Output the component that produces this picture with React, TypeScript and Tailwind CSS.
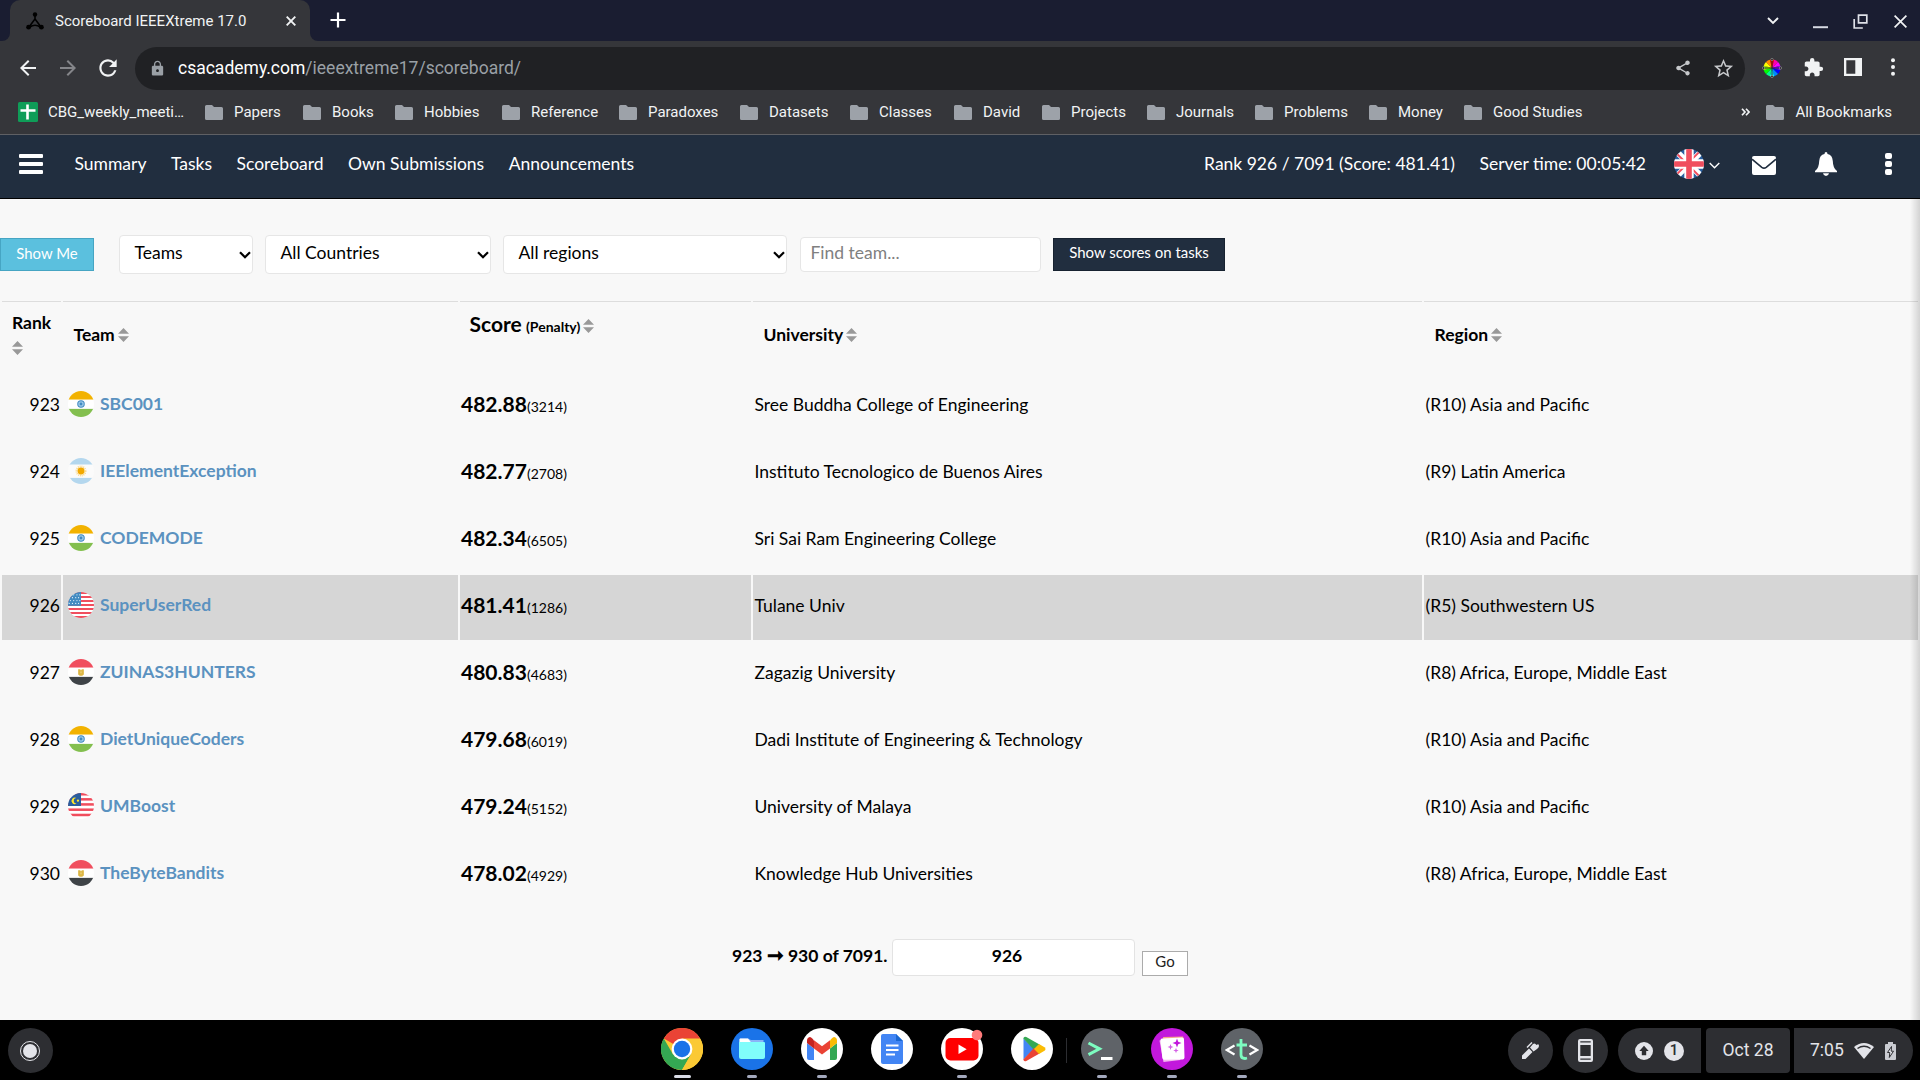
import React from 'react';
import {
  MdArrowBack,
  MdArrowForward,
  MdRefresh,
  MdLock,
  MdShare,
  MdStarBorder,
  MdExtension,
} from 'react-icons/md';

/* ---------- browser chrome ---------- */

function Favicon() {
  return (
    <svg viewBox="0 0 18 18" className="h-[18px] w-[18px]">
      <g stroke="#000" strokeWidth="1.6" fill="none">
        <path d="M9 3v4L3 15M9 7l6 8M3.5 15.5Q9 11 14.500 15.500" />
      </g>
      <circle cx="9" cy="2.500" r="2.200" />
      <circle cx="2.600" cy="15.200" r="2.400" />
      <circle cx="15.400" cy="15.200" r="2.400" />
    </svg>
  );
}

function TabStrip() {
  return (
    <div className="flex h-[41px] items-end bg-[#1a1d31] text-[#f1f3f4]">
      <div className="flex h-[41px] w-[10px] items-end bg-[#35363a]">
        <div className="h-[41px] w-[10px] rounded-br-[8px] bg-[#1a1d31]" />
      </div>
      <div className="flex h-[41px] w-[300px] items-center rounded-t-[10px] bg-[#35363a] pl-[16px]">
        <Favicon />
        <span className="ml-[11px] w-[231px] whitespace-nowrap pt-[2px] text-[15px]">Scoreboard IEEEXtreme 17.0</span>
        <svg viewBox="0 0 10 10" className="h-[10px] w-[10px]" stroke="#f1f3f4" strokeWidth="1.900">
          <path d="M.7.7l8.600 8.600M9.300.7L.7 9.300" />
        </svg>
      </div>
      <div className="h-[41px] w-[10px] bg-[#35363a]">
        <div className="h-[41px] w-[10px] rounded-bl-[8px] bg-[#1a1d31]" />
      </div>
      <svg viewBox="0 0 16 16" className="mb-[13px] ml-[10px] h-[16px] w-[16px]" stroke="#fff" strokeWidth="2.200">
        <path d="M8 .5v15M.5 8h15" />
      </svg>
      <div className="ml-auto flex h-[41px] items-center pr-[13px] pt-px">
        <svg viewBox="0 0 12 8" className="h-[8px] w-[12px]" fill="none" stroke="#f1f3f4" strokeWidth="1.900">
          <path d="M1 1l5 5 5-5" />
        </svg>
        <svg viewBox="0 0 15 15" className="ml-[34px] h-[15px] w-[15px]" fill="none" stroke="#d6d9e2" strokeWidth="2">
          <path d="M0 13.200h15" />
        </svg>
        <svg viewBox="0 0 15 15" className="ml-[25px] h-[15px] w-[15px]" fill="none" stroke="#dfe1e8" strokeWidth="1.700">
          <path d="M5.500 1.200h8.300v7.600H5.500zM1.200 5v9h8.600" />
        </svg>
        <svg viewBox="0 0 13 13" className="ml-[26px] h-[13px] w-[13px]" stroke="#f1f3f4" strokeWidth="1.700">
          <path d="M.6.600l11.800 11.800M12.400.6L.6 12.400" />
        </svg>
      </div>
    </div>
  );
}

function ColorWheel() {
  const hues = ['#f00', '#f0a', '#f0f', '#80f', '#00f', '#08f', '#0ff', '#0f8', '#0f0', '#8f0', '#ff0', '#f80'];
  const point = (deg: number) => {
    const r = ((deg - 90) * Math.PI) / 180;
    return `${10 + 8.5 * Math.cos(r)} ${10 + 8.5 * Math.sin(r)}`;
  };
  return (
    <svg viewBox="0 0 20 20" className="h-[20px] w-[20px]">
      {hues.map((c, i) => (
        <path key={c} fill={c} d={`M10 10L${point(i * 30 - 15)}A8.500 8.500 0 0 1 ${point(i * 30 + 15)}z`} />
      ))}
      <path d="M10 0v20M0 10h20" stroke="#222" strokeWidth=".9" />
      <g fill="#222" stroke="#bbb" strokeWidth=".5">
        <circle cx="10" cy="1.500" r="1.200" />
        <circle cx="10" cy="18.500" r="1.200" />
        <circle cx="1.500" cy="10" r="1.200" />
        <circle cx="18.500" cy="10" r="1.200" />
      </g>
    </svg>
  );
}

function AddressRow() {
  return (
    <div className="flex h-[53px] items-center bg-[#35363a] pt-px">
      <MdArrowBack className="mb-px ml-[16px] h-[24px] w-[24px] text-[#f1f3f4]" />
      <MdArrowForward className="mb-px ml-[16px] h-[24px] w-[24px] text-[#85868a]" />
      <MdRefresh className="mb-px ml-[15px] h-[26px] w-[26px] text-[#f1f3f4]" />
      <div className="ml-[14px] flex h-[43px] w-[1610px] items-center rounded-full bg-[#202124] pl-[14px] pr-[10px]">
        <MdLock className="h-[17px] w-[17px] text-[#9aa0a6]" />
        <span className="ml-[12px] text-[17.5px] text-white">
          csacademy.com<span className="text-[#9aa0a6]">/ieeextreme17/scoreboard/</span>
        </span>
        <MdShare className="ml-auto h-[18px] w-[18px] text-[#c6c8cb]" />
        <MdStarBorder className="ml-[20px] h-[23px] w-[23px] text-[#c6c8cb]" />
      </div>
      <div className="mb-px ml-[17px]">
        <ColorWheel />
      </div>
      <MdExtension className="mb-px ml-[21px] h-[21px] w-[21px] text-[#f1f3f4]" />
      <svg viewBox="0 0 18 18" className="mb-[2px] ml-[20px] h-[18px] w-[18px]">
        <path fill="#f1f3f4" fillRule="evenodd" d="M0 0h18v18H0zM2.300 2.300v13.400h9V2.300z" />
      </svg>
      <svg viewBox="0 0 4 18" className="mb-[2px] ml-[29px] h-[18px] w-[4px]" fill="#f1f3f4">
        <circle cx="2" cy="2.300" r="2" />
        <circle cx="2" cy="9" r="2" />
        <circle cx="2" cy="15.700" r="2" />
      </svg>
    </div>
  );
}

function Folder() {
  return (
    <svg viewBox="0 0 18 15" className="mr-[11px] h-[15px] w-[18px] shrink-0">
      <path fill="#9da2a9" d="M1.500 0h5.500l2 2h7.500Q18 2 18 3.500v10Q18 15 16.500 15h-15Q0 15 0 13.500v-12Q0 0 1.500 0z" />
    </svg>
  );
}

const bookmarks: [string, string][] = [
  ['Papers', 'w-[98px]'],
  ['Books', 'w-[92px]'],
  ['Hobbies', 'w-[107px]'],
  ['Reference', 'w-[117px]'],
  ['Paradoxes', 'w-[121px]'],
  ['Datasets', 'w-[110px]'],
  ['Classes', 'w-[104px]'],
  ['David', 'w-[88px]'],
  ['Projects', 'w-[105px]'],
  ['Journals', 'w-[108px]'],
  ['Problems', 'w-[114px]'],
  ['Money', 'w-[95px]'],
  ['Good Studies', 'w-[120px]'],
];

function BookmarksBar() {
  return (
    <div className="flex h-[41px] items-center whitespace-nowrap border-b border-[#5f6064] bg-[#35363a] pb-[4px] text-[15px] text-[#f1f3f4]">
      <svg viewBox="0 0 20 20" className="ml-[18px] h-[20px] w-[20px]">
        <rect width="20" height="20" rx="1.500" fill="#0f9d58" />
        <path d="M9.500 2.500v15M2.500 8.500h15" stroke="#fff" strokeWidth="2.600" />
      </svg>
      <span className="ml-[10px] w-[157px]">CBG_weekly_meeti…</span>
      {bookmarks.map(([name, width]) => (
        <div key={name} className={`flex shrink-0 items-center ${width}`}>
          <Folder />
          {name}
        </div>
      ))}
      <svg viewBox="0 0 9 8" className="ml-auto h-[8px] w-[9px]" fill="none" stroke="#f1f3f4" strokeWidth="1.700">
        <path d="M1 .7L4 4 1 7.300M5 .7L8 4 5 7.300" />
      </svg>
      <div className="ml-[16px] mr-[28px] flex items-center">
        <Folder />
        All Bookmarks
      </div>
    </div>
  );
}

/* ---------- flags ---------- */

type Country = 'in' | 'ar' | 'us' | 'eg' | 'my' | 'gb';

function Stripes() {
  return (
    <>
      <rect width="64" height="64" fill="#fff" />
      {[0, 1, 2, 3, 4, 5, 6].map((i) => (
        <rect key={i} y={i * 9.850} width="64" height="4.920" fill="#f04e5e" />
      ))}
    </>
  );
}

function FlagArt({ code }: { code: Country }) {
  switch (code) {
    case 'in':
      return (
        <>
          <rect width="64" height="64" fill="#fff" />
          <rect width="64" height="21" fill="#f2b200" />
          <rect y="44" width="64" height="20" fill="#83bf4f" />
          <circle cx="32" cy="32" r="8" fill="#9cc9e8" stroke="#428bc1" strokeWidth="2.500" />
          <circle cx="32" cy="32" r="3.500" fill="#428bc1" />
        </>
      );
    case 'ar':
      return (
        <>
          <rect width="64" height="64" fill="#fbfbfb" />
          <rect width="64" height="16" fill="#b4d7ee" />
          <rect y="49" width="64" height="15" fill="#b4d7ee" />
          <circle cx="32" cy="32" r="11" fill="none" stroke="#fbd88a" strokeWidth="5" strokeDasharray="2.300 2" />
          <circle cx="32" cy="32" r="8.500" fill="#f2a900" />
        </>
      );
    case 'eg':
      return (
        <>
          <rect width="64" height="64" fill="#fff" />
          <rect width="64" height="21" fill="#f04e5e" />
          <rect y="44" width="64" height="20" fill="#3e4347" />
          <path d="M25 25h5l2 3 2-3h5v13l-4 3h-6l-4-3z" fill="#dcb644" />
          <path d="M31 31h2v4h-2z" fill="#f3e0a0" />
        </>
      );
    case 'us':
      return (
        <>
          <Stripes />
          <rect width="32" height="34" fill="#428bc1" />
          {[5, 12, 19, 26].map((y, row) =>
            [6, 14, 22, 29].map((x) => <circle key={`${x}-${y}`} cx={x - (row % 2) * 3} cy={y + 2} r="1.500" fill="#e6f1fa" />),
          )}
        </>
      );
    case 'my':
      return (
        <>
          <rect width="64" height="64" fill="#fff" />
          {[0, 12.5, 25, 38, 51].map((y) => (
            <rect key={y} y={y} width="64" height="6.200" fill="#f04e5e" />
          ))}
          <rect width="32" height="32" fill="#2a5f9e" />
          <path d="M21 12.500a8 8 0 1 0 0 13.500 6.500 6.500 0 1 1 0-13.500z" fill="#ffe62e" />
          <circle cx="24.500" cy="19" r="2.800" fill="#ffe62e" />
        </>
      );
    case 'gb':
      return (
        <>
          <rect width="64" height="64" fill="#2a5f9e" />
          <path d="M0 0l64 64M64 0L0 64" stroke="#fff" strokeWidth="13" />
          <path d="M4 8l56 56M60 0L0 60" stroke="#f04e5e" strokeWidth="4" />
          <path d="M32 0v64M0 32h64" stroke="#fff" strokeWidth="20" />
          <path d="M32 0v64M0 32h64" stroke="#f04e5e" strokeWidth="12" />
        </>
      );
  }
}

function Flag({ code, className }: { code: Country; className: string }) {
  return (
    <span className={`shrink-0 overflow-hidden rounded-full ${className}`}>
      <svg viewBox="0 0 64 64" className="h-full w-full">
        <FlagArt code={code} />
      </svg>
    </span>
  );
}

/* ---------- site navigation ---------- */

function SiteNav() {
  return (
    <nav className="flex h-[64px] items-center border-b border-black bg-[#212e3f] pb-[5px] text-[17.5px] text-white">
      <div className="ml-[19px] flex w-[24px] flex-col gap-[4px]">
        <div className="h-[4px] rounded-[1px] bg-white" />
        <div className="h-[4px] rounded-[1px] bg-white" />
        <div className="h-[4px] rounded-[1px] bg-white" />
      </div>
      <div className="ml-[31.5px] flex gap-[24.5px]">
        <span>Summary</span>
        <span>Tasks</span>
        <span>Scoreboard</span>
        <span>Own Submissions</span>
        <span>Announcements</span>
      </div>
      <div className="ml-auto flex items-center">
        <span>Rank 926 / 7091 (Score: 481.41)</span>
        <span className="ml-[24.5px]">Server time: 00:05:42</span>
        <Flag code="gb" className="ml-[28px] h-[30px] w-[30px]" />
        <svg viewBox="0 0 11 7" className="ml-[5px] mt-[3px] h-[7px] w-[11px]" fill="none" stroke="#fff" strokeWidth="1.400">
          <path d="M.7.9l4.800 4.800L10.300.9" />
        </svg>
        <svg viewBox="0 0 24 19" className="ml-[32px] mt-[3px] h-[19px] w-[24px]">
          <rect width="24" height="19" rx="2" fill="#fff" />
          <path d="M0 3.200l9.800 8.100q2.200 1.600 4.400 0L24 3.200" fill="none" stroke="#212e3f" strokeWidth="1.600" />
        </svg>
        <svg viewBox="0 0 22 24" className="ml-[39px] h-[24px] w-[22px]" fill="#fff">
          <path d="M11 0q1.500 0 1.500 2Q17.500 3 17.800 9q.2 7.500 4.200 10v1.300H0V19q4-2.500 4.200-10Q4.500 3 9.500 2 9.500 0 11 0zM8 21.300h6q-.5 2.700-3 2.700t-3-2.700z" />
        </svg>
        <div className="mb-px ml-[48px] mr-[28px] flex flex-col gap-[2px]">
          <div className="h-[6px] w-[7px] rounded-[2px] bg-white" />
          <div className="h-[6px] w-[7px] rounded-[2px] bg-white" />
          <div className="h-[6px] w-[7px] rounded-[2px] bg-white" />
        </div>
      </div>
    </nav>
  );
}

/* ---------- filters ---------- */

function SelectBox({ label, className }: { label: string; className: string }) {
  return (
    <div className={`flex h-[39px] items-center justify-between rounded-[4px] border border-[#e6e6e6] bg-white pb-[3px] pl-[14.5px] pr-px ${className}`}>
      {label}
      <svg viewBox="0 0 12 8" className="mt-[4px] h-[8px] w-[12px]" fill="none" stroke="#000" strokeWidth="2.200">
        <path d="M1 1.200l5 5 5-5" />
      </svg>
    </div>
  );
}

function Filters() {
  return (
    <div className="flex h-[102px] items-start pt-[36px] text-[17.5px] text-black">
      <button className="mt-[3px] h-[33px] w-[94px] border border-[#46a5c3] bg-[#5bc0de] pb-[2px] text-[14.9px] text-white">Show Me</button>
      <SelectBox label="Teams" className="ml-[25px] w-[134px]" />
      <SelectBox label="All Countries" className="ml-[12px] w-[226px]" />
      <SelectBox label="All regions" className="ml-[12px] w-[284px]" />
      <input
        placeholder="Find team..."
        className="ml-[13px] mt-[2px] h-[35px] w-[241px] rounded-[4px] border border-[#e6e6e6] bg-white pb-[4px] pl-[9.5px] placeholder:text-[#808080]"
      />
      <button className="ml-[12px] mt-[3px] h-[33px] w-[172px] border border-[#172230] bg-[#212e3f] pb-[4px] text-[15px] text-white">
        Show scores on tasks
      </button>
    </div>
  );
}

/* ---------- table ---------- */

function SortIcon({ className = '' }: { className?: string }) {
  return (
    <svg viewBox="0 0 11 14" className={`h-[14px] w-[11px] shrink-0 ${className}`} fill="#999">
      <path d="M5.500 0L11 5.700H0zM5.500 14L0 8.300h11z" />
    </svg>
  );
}

interface Row {
  rank: number;
  flag: Country;
  team: string;
  score: string;
  penalty: number;
  university: string;
  region: string;
}

const rows: Row[] = [
  { rank: 923, flag: 'in', team: 'SBC001', score: '482.88', penalty: 3214, university: 'Sree Buddha College of Engineering', region: '(R10) Asia and Pacific' },
  { rank: 924, flag: 'ar', team: 'IEElementException', score: '482.77', penalty: 2708, university: 'Instituto Tecnologico de Buenos Aires', region: '(R9) Latin America' },
  { rank: 925, flag: 'in', team: 'CODEMODE', score: '482.34', penalty: 6505, university: 'Sri Sai Ram Engineering College', region: '(R10) Asia and Pacific' },
  { rank: 926, flag: 'us', team: 'SuperUserRed', score: '481.41', penalty: 1286, university: 'Tulane Univ', region: '(R5) Southwestern US' },
  { rank: 927, flag: 'eg', team: 'ZUINAS3HUNTERS', score: '480.83', penalty: 4683, university: 'Zagazig University', region: '(R8) Africa, Europe, Middle East' },
  { rank: 928, flag: 'in', team: 'DietUniqueCoders', score: '479.68', penalty: 6019, university: 'Dadi Institute of Engineering & Technology', region: '(R10) Asia and Pacific' },
  { rank: 929, flag: 'my', team: 'UMBoost', score: '479.24', penalty: 5152, university: 'University of Malaya', region: '(R10) Asia and Pacific' },
  { rank: 930, flag: 'eg', team: 'TheByteBandits', score: '478.02', penalty: 4929, university: 'Knowledge Hub Universities', region: '(R8) Africa, Europe, Middle East' },
];

const columns = 'grid grid-cols-[59px_395px_291px_669px_494px] gap-x-[2px] px-[2px]';

function HeaderCell({ label }: { label: string }) {
  return (
    <div className="flex items-center border-t border-[#dddddd] pb-[4px] pl-[10.5px]">
      <span className="pt-px">{label}</span>
      <SortIcon className="mb-px ml-[3px]" />
    </div>
  );
}

function Table() {
  return (
    <div className="text-[17.5px] text-black">
      <div className={`${columns} mb-[2px] h-[71px] font-bold`}>
        <div className="border-t border-[#dddddd] pl-[10px] pt-[11px]">
          <div className="leading-[20px]">Rank</div>
          <SortIcon className="-ml-[0.5px] mt-[8px]" />
        </div>
        <HeaderCell label="Team" />
        <div className="flex items-start border-t border-[#dddddd] pl-[9.5px] pt-[9px]">
          <div className="leading-[26px]">
            <span className="text-[21px]">Score</span> <span className="text-[14px]">(Penalty)</span>
          </div>
          <SortIcon className="ml-[3px] mt-[8px]" />
        </div>
        <HeaderCell label="University" />
        <HeaderCell label="Region" />
      </div>
      {rows.map((r) => {
        const cell = `flex items-center ${r.rank === 926 ? 'bg-[#d6d6d6]' : ''}`;
        return (
          <div key={r.rank} className={`${columns} mb-[2px] h-[65px]`}>
            <div className={`${cell} justify-end pb-[2px] pr-[1px]`}>{r.rank}</div>
            <div className={`${cell} pb-[5px] pl-[5px]`}>
              <Flag code={r.flag} className="h-[26px] w-[26px]" />
              <span className="ml-[6px] pt-px font-bold text-[#5b92c0]">{r.team}</span>
            </div>
            <div className={`${cell} pb-[2px] pl-px`}>
              <div className="leading-[26px]">
                <span className="text-[21px] font-bold">{r.score}</span>
                <span className="text-[14px]">({r.penalty})</span>
              </div>
            </div>
            <div className={`${cell} pb-[2px] pl-[1.5px]`}>{r.university}</div>
            <div className={`${cell} pb-[2px] pl-[1.5px]`}>{r.region}</div>
          </div>
        );
      })}
    </div>
  );
}

function Pagination() {
  return (
    <div className="flex h-[110px] items-start pl-[732px] pt-[29px] text-[17.5px] font-bold text-black">
      <span className="w-[160px] whitespace-nowrap pt-[5px] leading-[24px]">
        923 <span className="text-[20px] leading-none">➞</span> 930 of 7091.
      </span>
      <div className="h-[37px] w-[243px] rounded-[4px] border border-[#e3e3e3] bg-white pr-[13px] text-center leading-[32px]">926</div>
      <button className="ml-[7px] mt-[12px] h-[25px] w-[46px] border border-[#ababab] bg-white pb-[5px] text-[15px] font-normal leading-[18px] text-[#222]">
        Go
      </button>
    </div>
  );
}

/* ---------- shelf ---------- */

function ChromeIcon() {
  return (
    <svg viewBox="0 0 42 42" className="h-[42px] w-[42px]">
      <circle cx="21" cy="21" r="21" fill="#fbc934" />
      <path d="M21 21L2.800 10.500A21 21 0 0 1 39.200 10.500z" fill="#ea4335" />
      <path d="M2.800 10.500A21 21 0 0 0 21 42L30.100 26.200 21 31.500 11.900 26.200z" fill="#34a853" />
      <path d="M21 10.500h18.200A21 21 0 0 1 21 42l9.100-15.800z" fill="#fbc934" />
      <circle cx="21" cy="21" r="10.400" fill="#fff" />
      <circle cx="21" cy="21" r="8.200" fill="#1a73e8" />
    </svg>
  );
}

function FilesIcon() {
  return (
    <svg viewBox="0 0 42 42" className="h-[42px] w-[42px]">
      <circle cx="21" cy="21" r="21" fill="#1a73e8" />
      <path d="M9 10.500h8l3 1.500h12.500v6H8.500v-6.500z" fill="#8ab4f8" />
      <path d="M9.500 10.500H17l2.800 3.500H8.500v-2.500q0-1 1-1z" fill="#fff" />
      <path d="M8 14h25q1 0 1 1v14q0 2-2 2H10q-2 0-2-2z" fill="#80fdfb" />
    </svg>
  );
}

function GmailIcon() {
  return (
    <svg viewBox="0 0 42 42" className="h-[42px] w-[42px]">
      <circle cx="21" cy="21" r="21" fill="#fff" />
      <path d="M6 15l7 5.500V32H8q-2 0-2-2z" fill="#4285f4" />
      <path d="M36 15l-7 5.500V32h5q2 0 2-2z" fill="#34a853" />
      <path d="M29 12.500v8L36 15v-2.500q0-3-2.800-3.500-1.700 0-4.200 3.500z" fill="#fbbc04" />
      <path d="M13 20.500v-8.300l8 6 8-6v8.300l-8 6z" fill="#ea4335" />
      <path d="M13 12.500v8L6 15v-2.500Q6 9.500 8.800 9q1.700 0 4.200 3.500z" fill="#c5221f" />
    </svg>
  );
}

function DocsIcon() {
  return (
    <svg viewBox="0 0 42 42" className="h-[42px] w-[42px]">
      <circle cx="21" cy="21" r="21" fill="#fff" />
      <path d="M12 6h13l7 7v21q0 2-2 2H12q-2 0-2-2V8q0-2 2-2z" fill="#4285f4" />
      <path d="M25 6l7 7h-7z" fill="#1967d2" />
      <path d="M15 17.500h12.500M15 22h12.500M15 26.500h9" stroke="#fff" strokeWidth="1.800" />
    </svg>
  );
}

function YoutubeIcon() {
  return (
    <svg viewBox="0 0 42 42" className="h-[42px] w-[42px] overflow-visible">
      <circle cx="21" cy="21" r="21" fill="#fff" />
      <rect x="4.500" y="10" width="33" height="22.500" rx="5" fill="#f00" />
      <path d="M17.500 16.500v9.500l8.200-4.800z" fill="#fff" />
      <circle cx="36" cy="7" r="5.300" fill="#ff7b7b" />
    </svg>
  );
}

function PlayIcon() {
  return (
    <svg viewBox="0 0 42 42" className="h-[42px] w-[42px]">
      <circle cx="21" cy="21" r="21" fill="#fff" />
      <path d="M12.500 10.500v21L23 21z" fill="#4285f4" />
      <path d="M12.300 10.500q.5-2.500 3-1.500L28.500 16.500 23 22z" fill="#34a853" />
      <path d="M12.300 31.500q.5 2.500 3 1.500L28.500 25.500 23 20z" fill="#ea4335" />
      <path d="M23 21l5-5 5.500 3.200q2 1.800 0 3.600L28 26z" fill="#fbbc04" />
    </svg>
  );
}

function TerminalIcon() {
  return (
    <svg viewBox="0 0 42 42" className="h-[42px] w-[42px]" fill="none">
      <circle cx="21" cy="21" r="21" fill="#5f6368" />
      <path d="M7.500 15L18.500 20.800 7.500 26.600" stroke="#7dfcc0" strokeWidth="3" />
      <path d="M20 30.500h11.500" stroke="#fff" strokeWidth="3" />
    </svg>
  );
}

function GalleryIcon() {
  return (
    <svg viewBox="0 0 42 42" className="h-[42px] w-[42px]">
      <circle cx="21" cy="21" r="21" fill="#c218dc" />
      <path d="M12 9l20-.5 1 3-20 5z" fill="#f5a68c" />
      <path d="M8.500 12.500l8-2 12 18.500 1 3-17 2z" fill="#f3b9ee" />
      <path d="M11 10.500l20-1q2 0 2 2l.5 18q0 2-2 2l-18 .3q-2 0-2.200-2L9.500 12.500q0-2 1.500-2z" fill="#fff" />
      <path d="M26 10.500l1.200 3.300 3.300 1.200-3.300 1.200L26 19.500l-1.200-3.300-3.300-1.200 3.300-1.200z" fill="#c218dc" />
      <path d="M19.500 16l.8 2.200 2.200.8-2.200.8-.8 2.200-.8-2.200-2.200-.8 2.200-.8zM25 19.800l.7 2 2 .7-2 .7-.7 2-.7-2-2-.7 2-.7z" fill="#d45fe6" />
    </svg>
  );
}

function TextIcon() {
  return (
    <div className="flex h-[42px] w-[42px] items-center justify-center rounded-full bg-[#5f6368] pb-px">
      <svg viewBox="0 0 10 12" className="mt-[2px] h-[12px] w-[10px]" fill="none" stroke="#fff" strokeWidth="2.300">
        <path d="M9.500 1.500L1.800 6l7.700 4.500" />
      </svg>
      <svg viewBox="0 0 12 24" className="mx-[1px] h-[24px] w-[12px]" fill="none" stroke="#7dfcc0" strokeWidth="2.800">
        <path d="M5 2v16q0 3.500 4 3.500l2-.5M.5 8H11" />
      </svg>
      <svg viewBox="0 0 10 12" className="mt-[2px] h-[12px] w-[10px]" fill="none" stroke="#fff" strokeWidth="2.300">
        <path d="M.5 1.500L8.200 6l-7.700 4.500" />
      </svg>
    </div>
  );
}

function ShelfApp({ icon, mark }: { icon: React.ReactNode; mark?: string }) {
  return (
    <div className="flex w-[70px] flex-col items-center">
      {icon}
      {mark && <div className={`mt-[5px] h-[3px] rounded-full ${mark}`} />}
    </div>
  );
}

const running = 'w-[10px] bg-[#a3a9bd]';

function Shelf() {
  return (
    <div className="flex h-[60px] items-start border-t border-black bg-black text-[#e3e4e9]">
      <div className="ml-[8px] mt-[7px] flex h-[45px] w-[45px] items-center justify-center rounded-full bg-[#2d2e32] pr-px">
        <div className="flex h-[20px] w-[20px] items-center justify-center rounded-full border-[1.500px] border-[#e3e4e9]">
          <div className="h-[14px] w-[14px] rounded-full bg-[#e3e4e9]" />
        </div>
      </div>
      <div className="ml-[594px] mt-[7px] flex">
        <ShelfApp icon={<ChromeIcon />} mark="w-[17px] bg-[#d9dce6]" />
        <ShelfApp icon={<FilesIcon />} mark={running} />
        <ShelfApp icon={<GmailIcon />} mark={running} />
        <ShelfApp icon={<DocsIcon />} />
        <ShelfApp icon={<YoutubeIcon />} mark={running} />
        <ShelfApp icon={<PlayIcon />} />
        <div className="-ml-px mt-[10px] h-[25px] w-px bg-[#2c2d31]" />
        <ShelfApp icon={<TerminalIcon />} mark={running} />
        <ShelfApp icon={<GalleryIcon />} mark={running} />
        <ShelfApp icon={<TextIcon />} mark={running} />
      </div>
      <div className="ml-auto mt-[7px] flex pr-[7px]">
        <div className="flex h-[45px] w-[45px] items-center justify-center rounded-full bg-[#2d2e32]">
          <svg viewBox="0 0 17 17" className="h-[17px] w-[17px]">
            <path d="M0 17v-3.500L7 6.500 10.500 10 3.500 17zM8 5.500l3-3.500q1.500-1.200 2.500 0l1 1Q17 1 17 4q0 1.500-2 3l-3.500 2.500z" fill="#e3e4e9" />
            <path d="M5 5.500l5-5" stroke="#e3e4e9" strokeWidth="1.500" />
          </svg>
        </div>
        <div className="ml-[10px] flex h-[45px] w-[45px] items-center justify-center rounded-full bg-[#2d2e32]">
          <svg viewBox="0 0 15 23" className="h-[23px] w-[15px]">
            <path fillRule="evenodd" fill="#e3e4e9" d="M2 0h11q2 0 2 2v19q0 2-2 2H2q-2 0-2-2V2Q0 0 2 0zM2.300 2.300v1.200h10.400V2.300zM2.300 6v11h10.400V6zM2.300 19.500v1.200h10.400v-1.200z" />
          </svg>
        </div>
        <div className="ml-[10px] flex h-[45px] w-[83px] items-center rounded-l-full rounded-r-[4px] bg-[#2d2e32] pl-[17px]">
          <svg viewBox="0 0 18 18" className="h-[18px] w-[18px]">
            <circle cx="9" cy="9" r="9" fill="#e3e4e9" />
            <path d="M9 3.800l4.700 5.200h-2.500v4.300H6.800V9H4.300z" fill="#2d2e32" />
          </svg>
          <div className="ml-[11px] flex h-[20px] w-[20px] items-center justify-center rounded-full bg-[#e3e4e9] text-[15px] font-medium text-[#2d2e32]">
            1
          </div>
        </div>
        <div className="ml-[5px] flex h-[45px] w-[84px] items-center justify-center rounded-[4px] bg-[#2d2e32] text-[17.5px]">
          Oct 28
        </div>
        <div className="ml-[4px] flex h-[45px] w-[119px] items-center rounded-l-[4px] rounded-r-full bg-[#2d2e32] pl-[16px] text-[17.5px]">
          7:05
          <svg viewBox="0 0 20 16" className="ml-[10px] h-[16px] w-[20px]">
            <path d="M0 4Q10-4 20 4L10 16z" fill="#e3e4e9" />
            <path d="M3.500 5.500Q10 1 16.500 5.500" fill="none" stroke="#2d2e32" strokeWidth="1.500" />
          </svg>
          <svg viewBox="0 0 11 18" className="ml-[11px] h-[18px] w-[11px]">
            <path d="M3 0h5v2h2q1 0 1 1v14q0 1-1 1H1q-1 0-1-1V3q0-1 1-1h2z" fill="#c9cbd1" />
            <path d="M6.500 4.500L2.500 10.500h2.300L4.300 15.500l4.200-6.300H6.200z" fill="#e3e4e9" stroke="#2d2e32" strokeWidth="1" />
          </svg>
        </div>
      </div>
    </div>
  );
}

export default function App() {
  return (
    <div className="flex h-[1080px] w-[1920px] flex-col overflow-hidden bg-[#f8f8f8] font-['Roboto',sans-serif]">
      <TabStrip />
      <AddressRow />
      <BookmarksBar />
      <div className="font-['Lato',sans-serif]">
        <SiteNav />
      </div>
      <main className="relative h-[821px] font-['Lato',sans-serif]">
        <Filters />
        <Table />
        <Pagination />
        <div className="pointer-events-none absolute right-0 top-0 h-full w-[10px] bg-gradient-to-r from-transparent to-black/15" />
      </main>
      <Shelf />
    </div>
  );
}
